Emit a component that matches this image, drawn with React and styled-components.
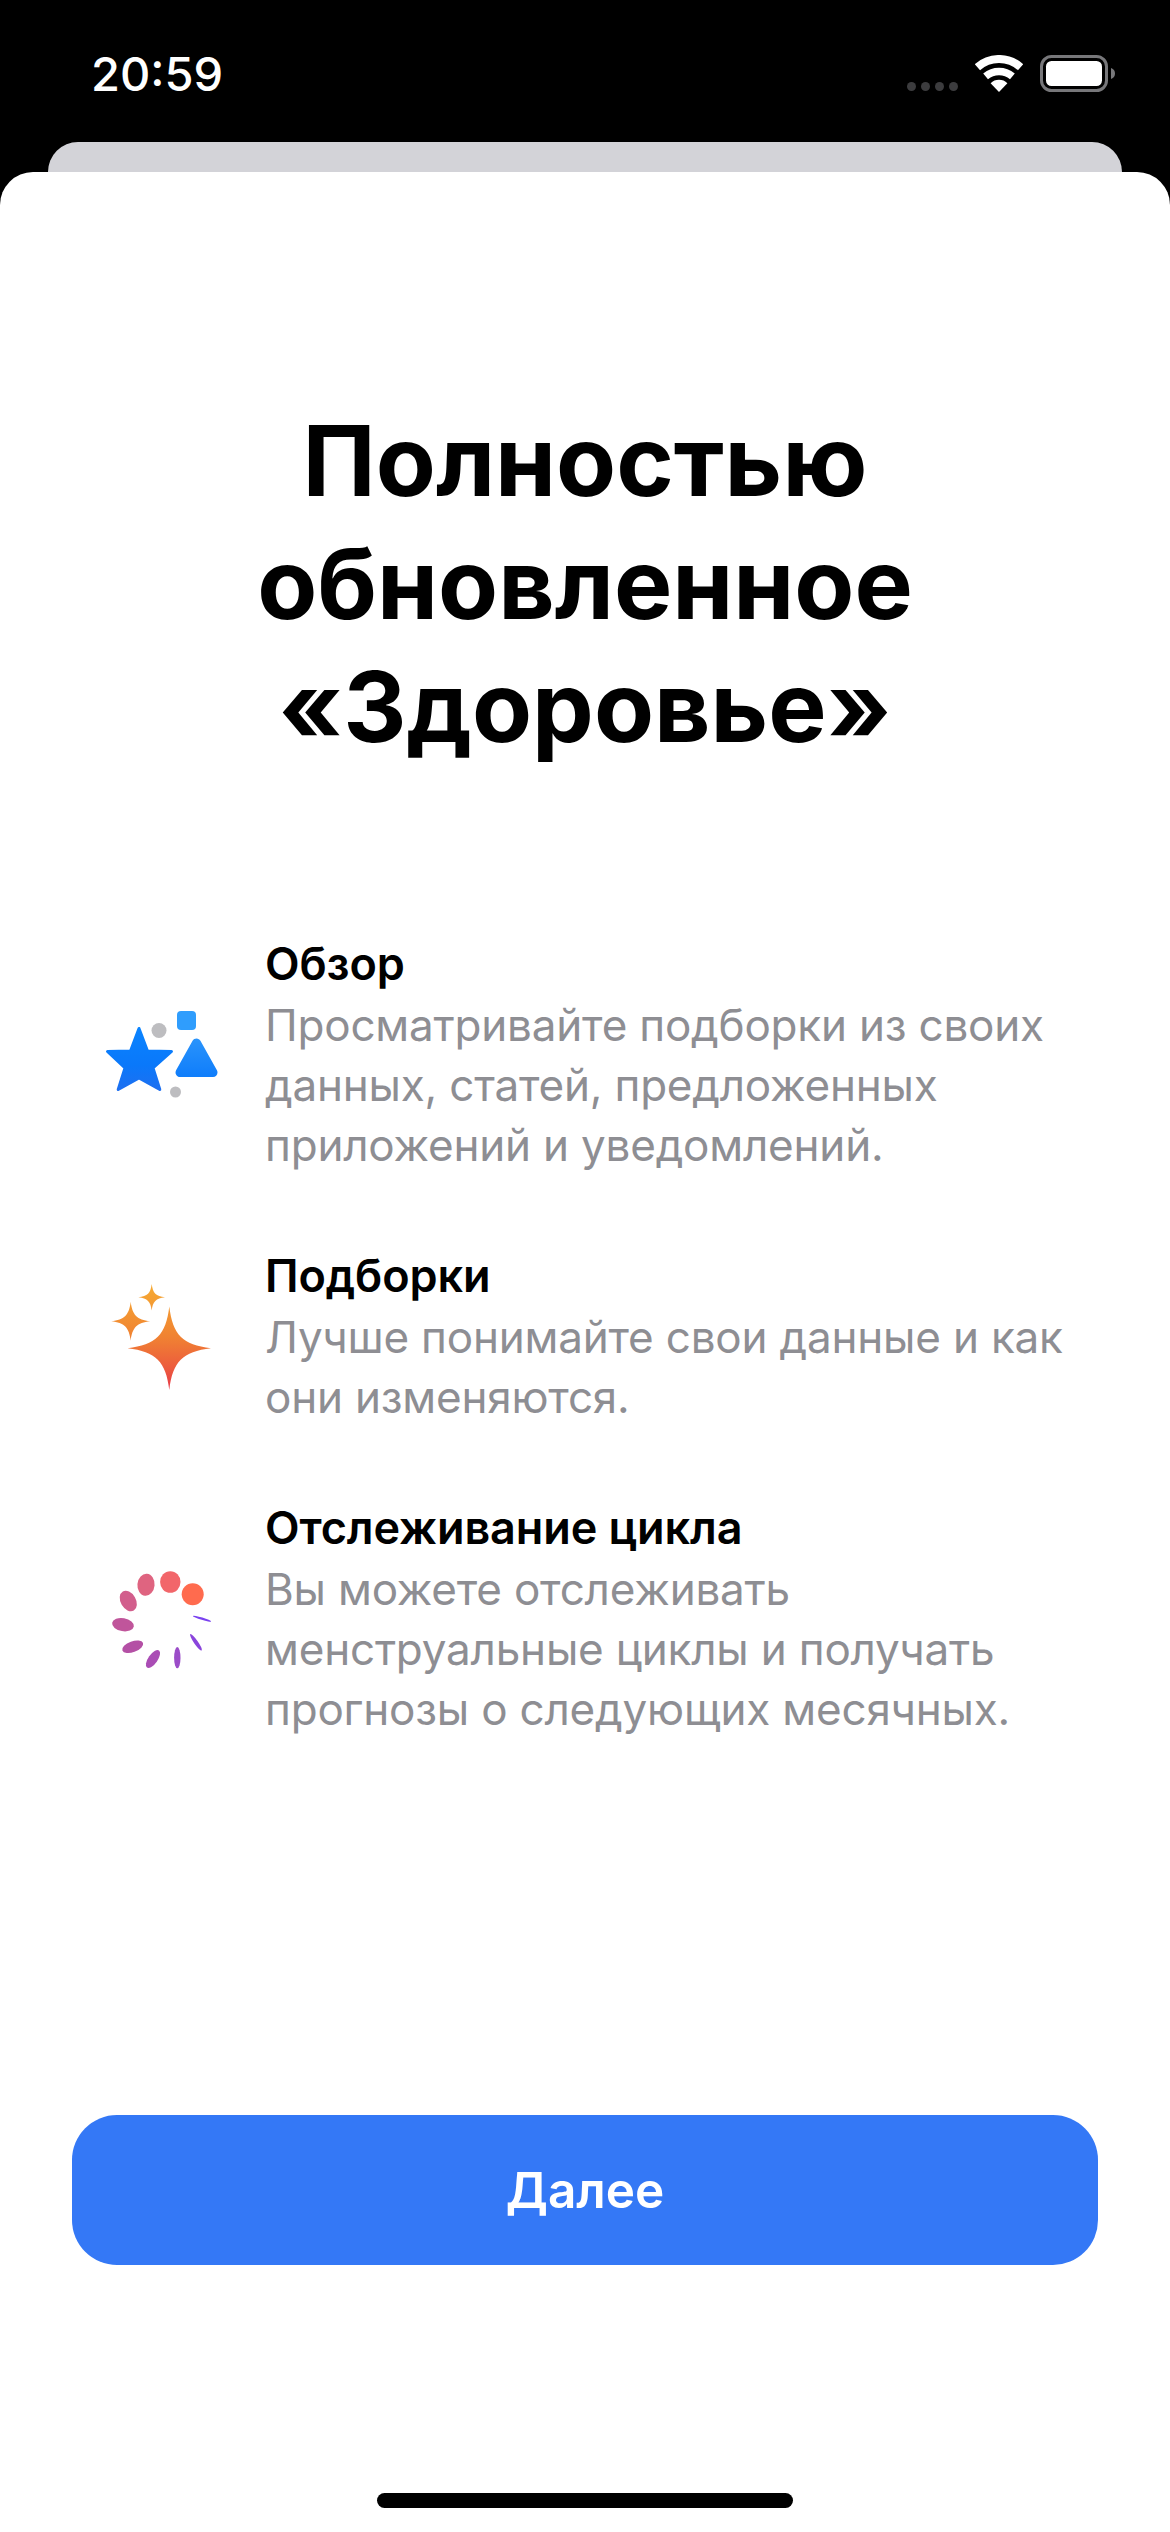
import React from 'react';
import styled, { createGlobalStyle } from 'styled-components';

const GlobalStyle = createGlobalStyle`
  html, body {
    margin: 0;
    padding: 0;
    background: #000;
  }
  body {
    font-family: Inter, "Noto Sans", "Liberation Sans", sans-serif;
  }
`;

const Screen = styled.div`
  width: 1170px;
  height: 2532px;
  display: flex;
  flex-direction: column;
  background: #000;
  overflow: hidden;
`;

const StatusBar = styled.div`
  height: 142px;
  flex: none;
  box-sizing: border-box;
  padding: 55px 55px 0 91px;
  display: flex;
  justify-content: space-between;
  align-items: flex-start;
`;

const Time = styled.div`
  color: #fff;
  font-size: 47px;
  font-weight: 500;
  line-height: 38px;
`;

const StatusIcons = styled.div`
  display: flex;
  align-items: flex-end;
`;

const SignalDots = styled.div`
  display: flex;
  gap: 5px;
  margin-right: 17px;
  margin-bottom: 1px;
`;

const SignalDot = styled.span`
  width: 9px;
  height: 9px;
  border-radius: 50%;
  background: #3c3c3e;
`;

const BehindSheet = styled.div`
  height: 30px;
  flex: none;
  margin: 0 48px;
  background: #d3d3d8;
  border-radius: 30px 30px 0 0;
`;

const Sheet = styled.main`
  flex: 1;
  display: flex;
  flex-direction: column;
  background: #fff;
  border-radius: 33px 33px 0 0;
  padding-top: 227px;
`;

const Title = styled.h1`
  margin: 0;
  color: #000;
  text-align: center;
  font-size: 98px;
  font-weight: 700;
  line-height: 123px;
`;

const Features = styled.div`
  display: flex;
  flex-direction: column;
  gap: 71px;
  margin-top: 166px;
`;

const Feature = styled.section`
  display: flex;
  align-items: center;
  padding-left: 90px;
  gap: 25px;
`;

const FeatureIcon = styled.svg`
  width: 150px;
  height: 120px;
  flex: none;
  margin-top: ${(p) => p.$lift}px;
`;

const FeatureText = styled.div`
  flex: 1;
  line-height: 60px;
`;

const FeatureTitle = styled.h2`
  margin: 0 0 1px;
  font-size: 45px;
  line-height: inherit;
  font-weight: 600;
  letter-spacing: -0.1px;
  color: #000;
`;

const FeatureBody = styled.p`
  margin: 0;
  color: #8e8e93;
  font-size: 44px;
  font-weight: 400;
  letter-spacing: -0.2px;
  white-space: pre-line;
`;

const NextButton = styled.button`
  display: block;
  margin: auto 72px 0;
  height: 150px;
  flex: none;
  border: 0;
  border-radius: 45px;
  background: #3478f6;
  color: #fff;
  font-family: inherit;
  font-size: 49.5px;
  font-weight: 600;
`;

const HomeBar = styled.div`
  width: 416px;
  height: 15px;
  flex: none;
  margin: 228px auto 24px;
  border-radius: 8px;
  background: #000;
`;

const WifiIcon = () => (
  <svg width="48" height="37" viewBox="0 0 48 37" style={{ marginRight: 17 }}>
    <g fill="none" stroke="#fff" strokeLinecap="butt">
      <path d="M2.4 12.2 A32.5 32.5 0 0 1 45.6 12.2" strokeWidth="8" />
      <path d="M10.6 21.4 A21 21 0 0 1 37.4 21.4" strokeWidth="7.5" />
    </g>
    <path d="M24 37 L15.6 28.2 A12 12 0 0 1 32.4 28.2 Z" fill="#fff" />
  </svg>
);

const BatteryIcon = () => (
  <svg width="75" height="37" viewBox="0 0 75 37">
    <rect x="1.5" y="1.5" width="65" height="34" rx="10" fill="none" stroke="#77777a" strokeWidth="3" />
    <rect x="6" y="6" width="56" height="25" rx="5.5" fill="#fff" />
    <path d="M71 13 C74 14 75 16 75 18.500 C75 21 74 23 71 24 Z" fill="#77777a" />
  </svg>
);

const OverviewIcon = () => (
  <FeatureIcon viewBox="0 0 150 120" $lift={-8}>
    <defs>
      <linearGradient id="starFill" gradientUnits="userSpaceOnUse" x1="49" y1="36" x2="49" y2="100">
        <stop offset="0" stopColor="#0a84ff" />
        <stop offset="0.6" stopColor="#0a78fa" />
        <stop offset="1" stopColor="#1f6ff0" />
      </linearGradient>
      <linearGradient id="triFill" gradientUnits="userSpaceOnUse" x1="107" y1="47" x2="107" y2="86">
        <stop offset="0" stopColor="#2a94fb" />
        <stop offset="1" stopColor="#0f7dfb" />
      </linearGradient>
    </defs>
    <rect x="87" y="20" width="19" height="19" rx="4" fill="#2f9dfd" />
    <circle cx="69" cy="39.500" r="7.500" fill="#bdbdc0" />
    <circle cx="85.500" cy="101" r="5.500" fill="#bdbdc0" />
    <polygon
      points="49,37.500 57.500,60 81.500,60.500 63,77 69.800,98.500 49,87 28.200,98.500 35,77 17.500,60.500 40.500,60"
      fill="url(#starFill)"
      stroke="url(#starFill)"
      strokeWidth="3"
      strokeLinejoin="round"
    />
    <polygon
      points="106.500,52 90,81.500 123,81.500"
      fill="url(#triFill)"
      stroke="url(#triFill)"
      strokeWidth="9"
      strokeLinejoin="round"
    />
  </FeatureIcon>
);

const sparkle = (cx, cy, r) => {
  const a = 0.08 * r;
  const b = 0.32 * r;
  return `M${cx} ${cy - r}
    C${cx + a} ${cy - b} ${cx + b} ${cy - a} ${cx + r} ${cy}
    C${cx + b} ${cy + a} ${cx + a} ${cy + b} ${cx} ${cy + r}
    C${cx - a} ${cy + b} ${cx - b} ${cy + a} ${cx - r} ${cy}
    C${cx - b} ${cy - a} ${cx - a} ${cy - b} ${cx} ${cy - r}Z`;
};

const HighlightsIcon = () => (
  <FeatureIcon viewBox="0 0 150 120" $lift={-12}>
    <defs>
      <linearGradient id="sparkFill" gradientUnits="userSpaceOnUse" x1="70" y1="13" x2="70" y2="119">
        <stop offset="0" stopColor="#f6ab33" />
        <stop offset="0.5" stopColor="#f08232" />
        <stop offset="0.8" stopColor="#ec5a3e" />
        <stop offset="1" stopColor="#e83848" />
      </linearGradient>
    </defs>
    <path d={sparkle(61.7, 26.3, 13.3)} fill="url(#sparkFill)" />
    <path d={sparkle(40.7, 50.3, 19.5)} fill="url(#sparkFill)" />
    <path d={sparkle(79.3, 77.3, 41.7)} fill="url(#sparkFill)" />
  </FeatureIcon>
);

const cycleDots = [
  [102.7, 43.3, 11, 11, 0, '#ff6b4e'],
  [80.3, 31, 10.2, 10.8, 0, '#f2666a'],
  [56, 33.7, 8.6, 11, 5, '#df6480'],
  [38.3, 50, 7.6, 11, -30, '#d25e8c'],
  [33, 73.7, 11, 6.5, 10, '#c0559b'],
  [42.7, 95.7, 11, 5.4, -20, '#b450a5'],
  [63, 108, 4.6, 10.5, 35, '#aa4db5'],
  [87.3, 106.7, 3.2, 10.6, 0, '#9b4cc8'],
  [106, 91.3, 2, 10, -35, '#8a45dc'],
  [112, 67.7, 9.5, 1.2, 17, '#7a42f0'],
];

const CycleIcon = () => (
  <FeatureIcon viewBox="0 0 150 120" $lift={-16}>
    {cycleDots.map(([cx, cy, rx, ry, rot, color]) => (
      <ellipse key={cx} cx={cx} cy={cy} rx={rx} ry={ry} fill={color} transform={`rotate(${rot} ${cx} ${cy})`} />
    ))}
  </FeatureIcon>
);

const features = [
  {
    icon: <OverviewIcon />,
    title: 'Обзор',
    body: 'Просматривайте подборки из своих\nданных, статей, предложенных\nприложений и уведомлений.',
  },
  {
    icon: <HighlightsIcon />,
    title: 'Подборки',
    body: 'Лучше понимайте свои данные и как\nони изменяются.',
  },
  {
    icon: <CycleIcon />,
    title: 'Отслеживание цикла',
    body: 'Вы можете отслеживать\nменструальные циклы и получать\nпрогнозы о следующих месячных.',
  },
];

export default function App() {
  return (
    <Screen>
      <GlobalStyle />
      <StatusBar>
        <Time>20:59</Time>
        <StatusIcons>
          <SignalDots>
            <SignalDot />
            <SignalDot />
            <SignalDot />
            <SignalDot />
          </SignalDots>
          <WifiIcon />
          <BatteryIcon />
        </StatusIcons>
      </StatusBar>
      <BehindSheet />
      <Sheet>
        <Title>
          Полностью
          <br />
          обновленное
          <br />
          «Здоровье»
        </Title>
        <Features>
          {features.map((f) => (
            <Feature key={f.title}>
              {f.icon}
              <FeatureText>
                <FeatureTitle>{f.title}</FeatureTitle>
                <FeatureBody>{f.body}</FeatureBody>
              </FeatureText>
            </Feature>
          ))}
        </Features>
        <NextButton>Далее</NextButton>
        <HomeBar />
      </Sheet>
    </Screen>
  );
}
